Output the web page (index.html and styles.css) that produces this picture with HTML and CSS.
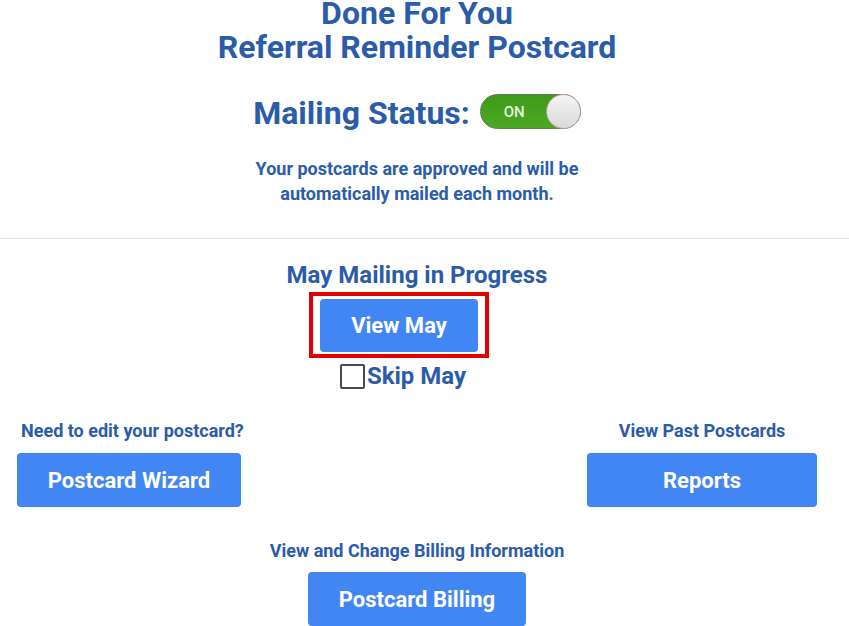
FILE: index.html
```html
<!DOCTYPE html>
<html lang="en">
<head>
<meta charset="utf-8">
<title>Referral Reminder Postcard</title>
<link rel="stylesheet" href="styles.css">
</head>
<body>
<main class="page">
  <section class="top">
    <h1 class="title"><span class="title-line">Done For You</span><span class="title-line">Referral Reminder Postcard</span></h1>
    <div class="status">
      <span class="status-label">Mailing Status:</span>
      <span class="toggle"><span class="toggle-text">ON</span><span class="knob"></span></span>
    </div>
    <p class="note">Your postcards are approved and will be<br>automatically mailed each month.</p>
  </section>
  <hr class="divider">
  <section class="current">
    <h2 class="sub">May Mailing in Progress</h2>
    <div class="highlight"><button class="btn btn-view" type="button">View May</button></div>
    <label class="skip"><input type="checkbox" class="check"><span class="skip-text">Skip May</span></label>
  </section>
  <section class="actions">
    <div class="action action-left">
      <div class="label label-left">Need to edit your postcard?</div>
      <button class="btn btn-wizard" type="button">Postcard Wizard</button>
    </div>
    <div class="action">
      <div class="label">View Past Postcards</div>
      <button class="btn btn-reports" type="button">Reports</button>
    </div>
  </section>
  <section class="billing">
    <div class="label">View and Change Billing Information</div>
    <button class="btn btn-billing" type="button">Postcard Billing</button>
  </section>
</main>
</body>
</html>
```
FILE: styles.css
```css
* { box-sizing: border-box; }
html, body { margin: 0; padding: 0; background: #ffffff; }
body {
  font-family: Roboto, "Liberation Sans", sans-serif;
  font-weight: 700;
  color: #2a5caa;
  overflow: hidden;
}
.page { width: 849px; }
.top, .current, .actions, .billing { width: 834px; }
.top { text-align: center; }
.title {
  margin: -4px 0 0;
  font-size: 32px;
  line-height: 34px;
  font-weight: 700;
}
.title-line { display: block; }
.status {
  display: flex;
  justify-content: center;
  align-items: flex-start;
  gap: 10px;
  margin-top: 30px;
}
.status-label {
  font-size: 32px;
  line-height: 34px;
  padding-top: 2px;
}
.toggle {
  position: relative;
  display: flex;
  align-items: center;
  width: 101px;
  height: 35px;
  border-radius: 18px;
  background: linear-gradient(#3f9a1a, #4ca823);
  border: 1px solid #5f7f55;
}
.toggle-text {
  color: #e6f3dc;
  font-size: 15px;
  font-weight: 500;
  margin-left: 23px;
}
.knob {
  position: absolute;
  right: -1px;
  top: -1px;
  width: 35px;
  height: 35px;
  border-radius: 50%;
  background: linear-gradient(#f4f4f4, #d9d9d9);
  border: 1px solid #c49a9a;
}
.note {
  margin: 26px 0 0;
  font-size: 18px;
  line-height: 25px;
}
.divider {
  border: 0;
  height: 1px;
  background: #e6e6e6;
  margin: 32px 0 0;
  width: 849px;
}
.current {
  display: flex;
  flex-direction: column;
  align-items: center;
}
.sub {
  margin: 23px 0 0;
  font-size: 24px;
  line-height: 26px;
  font-weight: 700;
}
.highlight {
  margin: 4px 36px 0 0;
  border: 4px solid #e00000;
  padding: 3px 7px 2px;
}
.btn {
  display: flex;
  align-items: center;
  justify-content: center;
  border: 0;
  border-radius: 4px;
  background: #4286f4;
  color: #ffffff;
  font-family: Roboto, "Liberation Sans", sans-serif;
  font-weight: 700;
  font-size: 22px;
  padding: 0;
  cursor: pointer;
}
.btn-view { width: 158px; height: 53px; }
.skip {
  display: flex;
  align-items: flex-start;
  gap: 2px;
  margin: 6px 28px 0 0;
}
.check {
  appearance: none;
  -webkit-appearance: none;
  margin: 0;
  width: 25px;
  height: 25px;
  border: 2px solid #4a4a4a;
  border-radius: 2px;
  background: #ffffff;
}
.skip-text {
  font-size: 24px;
  line-height: 25px;
}
.actions {
  display: flex;
  justify-content: space-between;
  padding: 0 17px;
  margin-top: 29px;
}
.action {
  display: flex;
  flex-direction: column;
  align-items: center;
}
.action-left { align-items: flex-start; }
.label {
  font-size: 18px;
  line-height: 25px;
}
.label-left { padding-left: 4px; }
.btn-wizard { width: 224px; height: 54px; margin-top: 10px; }
.btn-reports { width: 230px; height: 54px; margin-top: 10px; }
.billing {
  display: flex;
  flex-direction: column;
  align-items: center;
  margin-top: 31px;
}
.btn-billing { width: 218px; height: 54px; margin-top: 9px; }
```
